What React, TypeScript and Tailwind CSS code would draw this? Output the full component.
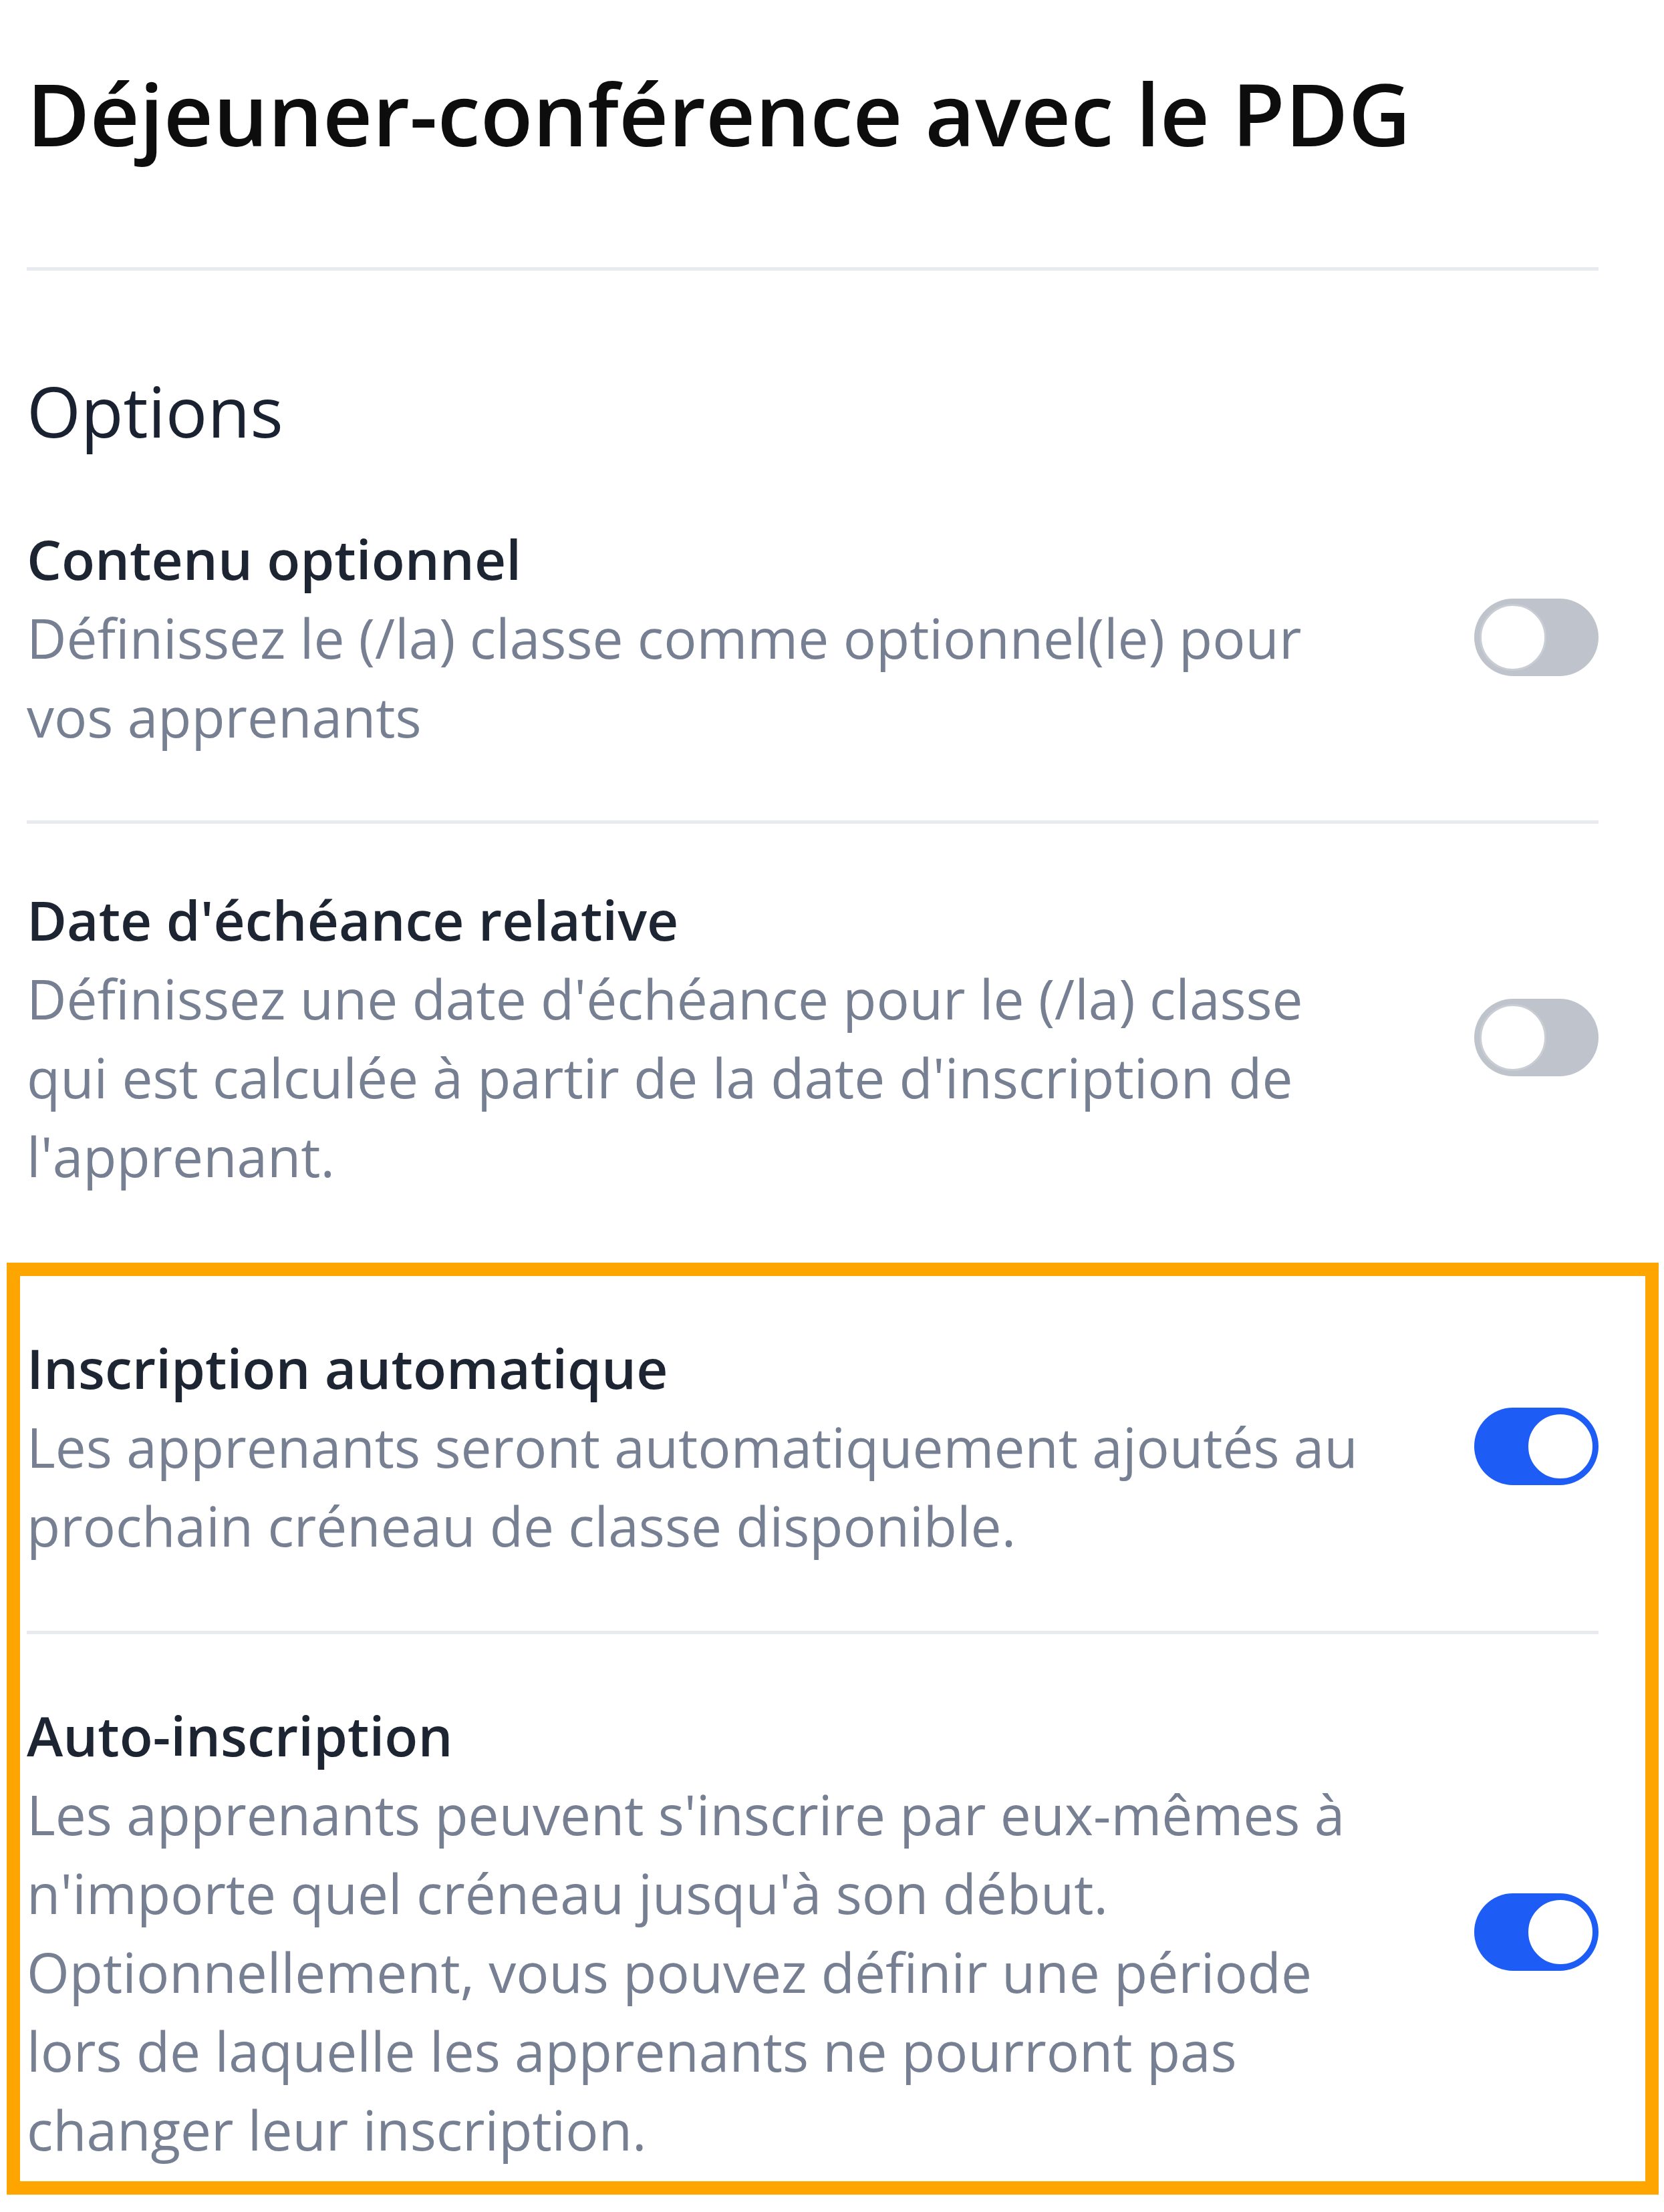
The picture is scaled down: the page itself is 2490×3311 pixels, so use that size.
import React from "react";

type Option = {
  title: string;
  description: string;
  enabled: boolean;
};

const Toggle = ({ enabled }: { enabled: boolean }) => {
  return (
    <div
      className={
        enabled
          ? "flex h-[116px] w-[186px] shrink-0 items-center justify-end rounded-full bg-[#1d5cf5] px-[6px]"
          : "flex h-[116px] w-[186px] shrink-0 items-center justify-start rounded-full bg-[#bfc4cc] px-[8px]"
      }
    >
      <div
        className={
          enabled
            ? "h-[102px] w-[102px] rounded-full border-[3px] border-[#1d5cf5] bg-white"
            : "h-[100px] w-[100px] rounded-full border-[3px] border-[#c9cdd4] bg-white"
        }
      />
    </div>
  );
};

const OptionRow = ({
  option,
  className,
}: {
  option: Option;
  className: string;
}) => {
  return (
    <div className={`flex items-center justify-between ${className}`}>
      <div className="w-[2030px]">
        <div className="text-[82px] leading-[118px] font-semibold text-[#1d2432]">
          {option.title}
        </div>
        <p className="text-[82px] leading-[118px] text-[#778093]">
          {option.description}
        </p>
      </div>
      <Toggle enabled={option.enabled} />
    </div>
  );
};

const Divider = () => <div className="h-[5px] w-full bg-[#e7ebef]" />;

export default function App() {
  const options: Option[] = [
    {
      title: "Contenu optionnel",
      description:
        "Définissez le (/la) classe comme optionnel(le) pour vos apprenants",
      enabled: false,
    },
    {
      title: "Date d'échéance relative",
      description:
        "Définissez une date d'échéance pour le (/la) classe qui est calculée à partir de la date d'inscription de l'apprenant.",
      enabled: false,
    },
    {
      title: "Inscription automatique",
      description:
        "Les apprenants seront automatiquement ajoutés au prochain créneau de classe disponible.",
      enabled: true,
    },
    {
      title: "Auto-inscription",
      description:
        "Les apprenants peuvent s'inscrire par eux-mêmes à n'importe quel créneau jusqu'à son début. Optionnellement, vous pouvez définir une période lors de laquelle les apprenants ne pourront pas changer leur inscription.",
      enabled: true,
    },
  ];

  return (
    <div
      className="min-h-screen w-[2490px] bg-white pl-[40px] pr-[98px] pt-[84px] pb-[38px]"
      style={{ fontFamily: '"Open Sans", "Noto Sans", sans-serif' }}
    >
      <h1 className="text-[129px] leading-[170px] font-semibold text-[#0d0d0d]">
        Déjeuner-conférence avec le PDG
      </h1>
      <div className="mt-[146px]">
        <Divider />
      </div>
      <h2 className="mt-[140px] text-[104px] leading-[140px] text-[#1a2130]">
        Options
      </h2>

      <OptionRow option={options[0]} className="pt-[92px] pb-[97px]" />
      <Divider />
      <OptionRow option={options[1]} className="pt-[84px] pb-[101px]" />

      <div className="-ml-[30px] -mr-[90px] border-[20px] border-[#ffa500] pl-[10px] pr-[70px]">
        <OptionRow option={options[2]} className="pt-[78px] pb-[99px]" />
        <Divider />
        <OptionRow option={options[3]} className="pt-[92px] pb-[19px]" />
      </div>
    </div>
  );
}
